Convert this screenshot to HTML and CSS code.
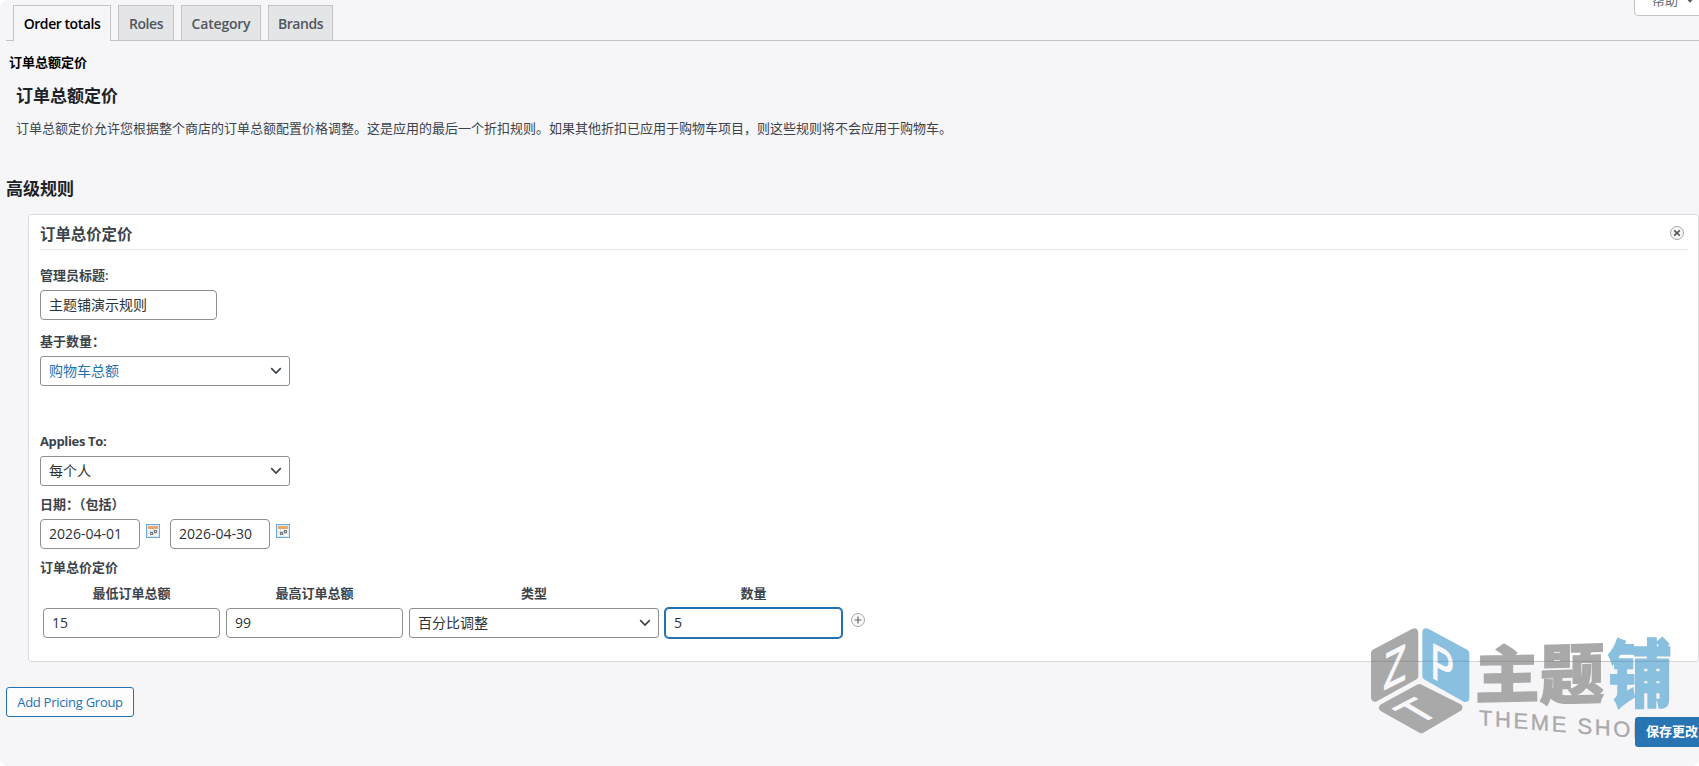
FILE: index.html
```html
<!DOCTYPE html>
<html lang="zh-CN">
<head>
<meta charset="utf-8">
<title>订单总额定价</title>
<link rel="stylesheet" href="styles.css">
</head>
<body>
<div class="page">
  <div class="help">帮助 <svg class="help-arrow" width="10" height="7" viewBox="0 0 12 8"><path d="M0 1h12L6 8z" fill="#50575e"/></svg></div>
  <nav class="tabs">
    <a class="tab active">Order totals</a>
    <a class="tab">Roles</a>
    <a class="tab">Category</a>
    <a class="tab">Brands</a>
  </nav>
  <h4 class="crumb">订单总额定价</h4>
  <h3 class="heading">订单总额定价</h3>
  <p class="intro">订单总额定价允许您根据整个商店的订单总额配置价格调整。这是应用的最后一个折扣规则。如果其他折扣已应用于购物车项目，则这些规则将不会应用于购物车。</p>
  <h3 class="section">高级规则</h3>

  <section class="panel">
    <header class="panel-head">
      <h4 class="panel-title">订单总价定价</h4>
      <svg class="close" width="16" height="16" viewBox="0 0 16 16"><circle cx="8" cy="8" r="6.5" fill="#f6f6f6" stroke="#a8a8a8"/><path d="M5.2 5.4l5.600 5.200M10.800 5.400l-5.600 5.200" stroke="#555" stroke-width="1.600"/></svg>
    </header>
    <label class="label first">管理员标题:</label>
    <div class="field text">主题铺演示规则</div>
    <label class="label">基于数量：</label>
    <div class="field select hover">购物车总额<svg class="chev" width="12" height="8" viewBox="0 0 12 8"><path d="M1.2 1.2L6 6l4.8-4.8"/></svg></div>
    <label class="label applies">Applies To:</label>
    <div class="field select">每个人<svg class="chev" width="12" height="8" viewBox="0 0 12 8"><path d="M1.2 1.2L6 6l4.8-4.8"/></svg></div>
    <label class="label tight">日期：（包括）</label>
    <div class="dates">
      <div class="field date">2026-04-01</div>
      <svg class="cal" width="14" height="14" viewBox="0 0 14 14"><path d="M0 0h14v14H0z" fill="#6fa8d2"/><path d="M1 1h12v12H1z" fill="#d9edf9"/><path d="M2 2h10v3H2z" fill="#eda76b"/><path d="M2 5h10v7H2z" fill="#fbfcfc"/><path d="M2 7.500h10M2 9.500h10M4.500 5v7M7.500 5v7" stroke="#c5cbd0" stroke-width=".6"/><path d="M4 8h3v3H4zM8 6h3v3H8z" fill="#77787a"/><path d="M5 9h1v1H5zM9 7h1v1H9z" fill="#ddd"/></svg>
      <div class="field date">2026-04-30</div>
      <svg class="cal" width="14" height="14" viewBox="0 0 14 14"><path d="M0 0h14v14H0z" fill="#6fa8d2"/><path d="M1 1h12v12H1z" fill="#d9edf9"/><path d="M2 2h10v3H2z" fill="#eda76b"/><path d="M2 5h10v7H2z" fill="#fbfcfc"/><path d="M2 7.500h10M2 9.500h10M4.500 5v7M7.500 5v7" stroke="#c5cbd0" stroke-width=".6"/><path d="M4 8h3v3H4zM8 6h3v3H8z" fill="#77787a"/><path d="M5 9h1v1H5zM9 7h1v1H9z" fill="#ddd"/></svg>
    </div>
    <label class="label tight">订单总价定价</label>
    <div class="grid">
      <span class="th">最低订单总额</span><span class="th">最高订单总额</span><span class="th">类型</span><span class="th">数量</span><span></span>
      <div class="field text">15</div>
      <div class="field text">99</div>
      <div class="field select small">百分比调整<svg class="chev" width="12" height="8" viewBox="0 0 12 8"><path d="M1.2 1.2L6 6l4.8-4.8"/></svg></div>
      <div class="field text focus">5</div>
      <svg class="plus" width="16" height="16" viewBox="0 0 16 16"><circle cx="8" cy="8" r="6.500" fill="#f8f8f8" stroke="#a8a8a8"/><path d="M8 4.500v7M4.500 8h7" stroke="#666" stroke-width="1.200"/></svg>
    </div>
  </section>

  <a class="add">Add Pricing Group</a>
  <a class="save">保存更改</a>

  <svg class="mark" width="349" height="156" viewBox="0 0 1047 468">
    <g stroke-linejoin="round" stroke-width="24">
      <path d="M75 129L193 67V198L75 263Z" fill="#a9a9aa" stroke="#a9a9aa"/>
      <path d="M229 67L346 130V264L229 198Z" fill="#89bfdf" stroke="#89bfdf"/>
      <path d="M99 293L208 234L325 293L214 358Z" fill="#a9a9aa" stroke="#a9a9aa"/>
    </g>
    <g class="cube-text">
      <text transform="matrix(1 -.5 -.04 1.400 100 241)">Z</text>
      <text transform="matrix(.95 .5 0 1.350 242 200)">P</text>
      <text transform="matrix(1.050 -.55 1.060 .63 205 345)">T</text>
    </g>
    <g class="brand-text">
      <text transform="matrix(1.040 -.020 0 1 375 264)">主</text>
      <text transform="matrix(1.040 -.030 0 1.060 569 268)">题</text>
      <text class="blue" transform="matrix(1.040 0 0 1.170 773 274)">铺</text>
    </g>
    <path d="M63 154H358M383 154H960" stroke="#000" stroke-opacity=".13" stroke-width="3"/>
    <text class="latin" transform="matrix(1 .080 0 1 387 346)" textLength="506">THEME SHOP</text>
  </svg>
</div>
</body>
</html>
```
FILE: styles.css
```css
html { background: #fff; }
body {
  margin: 0;
  overflow: hidden;
  font: 13px/20px "Open Sans", "Noto Sans CJK SC", sans-serif;
  color: #3c434a;
}
h3, h4, p { margin: 0; }
.page {
  position: relative;
  box-sizing: border-box;
  width: 1699px;
  height: 766px;
  padding-left: 6px;
  overflow: hidden;
  background: #f6f6f9;
  border-radius: 8px;
}
.help {
  position: absolute;
  right: -6px;
  top: -12px;
  box-sizing: border-box;
  width: 71px;
  height: 28px;
  padding: 2px 0 0 17px;
  background: #fff;
  border: 1px solid #c3c4c7;
  border-radius: 0 0 4px 4px;
  line-height: 18px;
  white-space: nowrap;
  color: #646970;
}
.help-arrow { margin-left: 4px; vertical-align: 2px; }
.tabs {
  display: flex;
  gap: 7px;
  height: 35px;
  padding: 5px 0 0 7px;
  border-bottom: 1px solid #c3c4c7;
}
.tab {
  box-sizing: border-box;
  height: 35px;
  padding: 5px 0;
  border: 1px solid #c3c4c7;
  border-bottom: 0;
  background: #e4e5e6;
  color: #50575e;
  font-size: 14px;
  font-weight: 600;
  letter-spacing: -.45px;
  line-height: 25px;
  text-align: center;
}
.tab:nth-child(1) { width: 98px; }
.tab:nth-child(2) { width: 56px; }
.tab:nth-child(3) { width: 80px; letter-spacing: -.2px; }
.tab:nth-child(4) { width: 65px; }
.tab.active { height: 36px; background: #f6f6f9; color: #000; }
.crumb { margin: 11px 0 0 3px; color: #000; font-size: 13px; }
.heading { margin: 13px 0 0 10px; color: #1d2327; font-size: 17px; line-height: 22px; }
.intro { margin: 11px 0 0 10px; }
.section { margin: 40px 0 0; color: #1d2327; font-size: 17px; line-height: 22px; }
.panel {
  box-sizing: border-box;
  width: 1671px;
  height: 448px;
  margin: 14px 0 0 22px;
  padding: 9px 10px 0 11px;
  background: #fff;
  border: 1px solid #dcdcde;
  border-radius: 3px;
}
.panel-head {
  display: flex;
  justify-content: space-between;
  height: 25px;
  border-bottom: 1px solid #e3e4e6;
}
.panel-title { font-size: 15.4px; line-height: 22px; }
.close { margin: 1px 3px 0 0; }
.label { display: block; height: 20px; margin-top: 11px; font-weight: 600; }
.label.first { margin-top: 15px; }
.label.applies { margin-top: 45px; font-weight: 700; letter-spacing: -.35px; }
.label.tight { margin-top: 8px; }
.field {
  box-sizing: border-box;
  height: 30px;
  padding: 0 8px;
  border: 1px solid #8c8f94;
  border-radius: 4px;
  background: #fff;
  color: #2c3338;
  font-size: 14px;
  line-height: 28px;
}
.label + .field, .label + .dates { margin-top: 5px; }
.text { width: 177px; }
.select {
  display: flex;
  align-items: center;
  justify-content: space-between;
  width: 250px;
  padding-right: 7px;
  border-radius: 3px;
}
.hover { color: #2271b1; }
.chev { fill: none; stroke: #3c434a; stroke-width: 1.7; }
.dates { display: flex; }
.date { width: 100px; }
.cal { margin: 5px 10px 0 6px; }
.grid {
  display: grid;
  grid-template-columns: 177px 177px 250px 177px 18px;
  column-gap: 6px;
  row-gap: 5px;
  margin: 6px 0 0 3px;
}
.th { font-weight: 600; text-align: center; }
.focus { border-color: #2271b1; box-shadow: 0 0 0 1px #2271b1; }
.plus { margin: 4px 0 0 2px; }
.add {
  display: block;
  box-sizing: border-box;
  width: 128px;
  height: 30px;
  margin-top: 25px;
  border: 1px solid #2271b1;
  border-radius: 3px;
  background: #fdfdfe;
  color: #2271b1;
  letter-spacing: -.28px;
  line-height: 28px;
  text-align: center;
}
.save {
  position: relative;
  z-index: 1;
  display: block;
  width: 80px;
  height: 30px;
  margin-left: 1629px;
  text-indent: 11px;
  border-radius: 3px;
  background: rgba(34, 113, 177, .97);
  color: #fff;
  font-weight: 600;
  line-height: 29px;
}
.mark { position: absolute; left: 1350px; top: 610px; }
.cube-text { fill: #f8f8fa; font: 400 110px "Liberation Sans", sans-serif; stroke: #f8f8fa; stroke-width: 3; }
.brand-text { fill: #a9a9aa; stroke: #a9a9aa; stroke-width: 4; font: 900 186px "Noto Sans CJK SC", sans-serif; }
.brand-text .blue { fill: #89bfdf; stroke: #89bfdf; }
.latin { fill: #a9a9aa; font: 400 66px "Liberation Sans", sans-serif; stroke: #a9a9aa; stroke-width: 1; }
```
